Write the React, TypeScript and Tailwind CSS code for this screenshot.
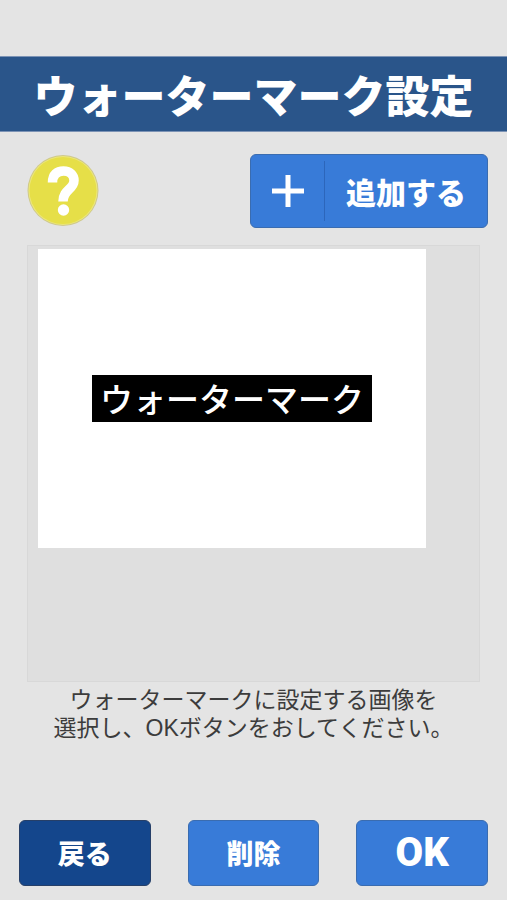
import React from "react";
import clsx from "clsx";

interface ActionButtonProps {
  label: string;
  className?: string;
  onClick?: () => void;
}

function ActionButton({ label, className, onClick }: ActionButtonProps) {
  return (
    <button
      type="button"
      onClick={onClick}
      className={clsx(
        "flex h-[66px] flex-1 items-center justify-center rounded-md border font-black text-white",
        className
      )}
    >
      {label}
    </button>
  );
}

function HelpButton() {
  return (
    <button type="button" aria-label="ヘルプ" className="rounded-full">
      <svg viewBox="0 0 72 72" className="h-[72px] w-[72px]">
        <circle cx="36" cy="36.5" r="35.5" fill="#cfc98a" />
        <circle cx="36" cy="36.5" r="34.5" fill="#ece77a" />
        <circle cx="36" cy="36.5" r="33.5" fill="#e6df48" />
        <path
          d="M25.5 28.5C25.5 20.5 30 17 36.5 17C43 17 47 21 47 26.5C47 35.5 36 35.5 36 47.5"
          fill="none"
          stroke="#fff"
          strokeWidth="9.5"
        />
        <circle cx="36.5" cy="56" r="5.7" fill="#fff" />
      </svg>
    </button>
  );
}

export default function App() {
  const [hasImage, setHasImage] = React.useState(true);

  return (
    <div className="flex min-h-screen flex-col bg-[#e4e4e4] pt-14 font-['Liberation_Sans','Noto_Sans_CJK_JP',sans-serif]">
      <header className="flex h-[76px] items-center justify-center border-y border-[#7c93b5] bg-[#2a558a]">
        <h1 className="font-['Noto_Sans_CJK_JP',sans-serif] text-[44px] leading-none font-black whitespace-nowrap text-white">
          ウォーターマーク設定
        </h1>
      </header>

      <div className="flex items-start justify-between pt-[22px] pr-[19px] pl-[27px]">
        <HelpButton />
        <button
          type="button"
          onClick={() => setHasImage(true)}
          className="flex h-[74px] w-[238px] items-center rounded-md border border-[#3a6cb0] bg-[#387bd8] text-white"
        >
          <span className="flex h-[60px] w-[74px] items-center justify-center border-r border-[#2c66bb]">
            <svg viewBox="0 0 32 32" className="h-8 w-8" aria-hidden="true">
              <path d="M16 0V32M0 16H32" stroke="#fff" strokeWidth="5" />
            </svg>
          </span>
          <span className="flex-1 text-center font-['Noto_Sans_CJK_JP',sans-serif] text-[30px] leading-none font-black">
            追加する
          </span>
        </button>
      </div>

      <main className="px-[27px] pt-[17px]">
        <div className="h-[437px] border border-[#d8d8d8] bg-[#dfdfdf] px-[10px] pt-[3px]">
          {hasImage && (
            <div className="flex aspect-[389/300] w-[90%] items-center justify-center bg-white">
              <span className="bg-black px-2 font-['Noto_Sans_CJK_JP',sans-serif] text-[33px] leading-[47px] font-medium whitespace-nowrap text-white">
                ウォーターマーク
              </span>
            </div>
          )}
        </div>
        <p className="pt-1 text-center text-[23px] leading-7 whitespace-nowrap text-[#3c3c3c]">
          ウォーターマークに設定する画像を
          <br />
          選択し、OKボタンをおしてください。
        </p>
      </main>

      <footer className="mt-auto flex gap-[37px] px-[19px] pb-[14px]">
        <ActionButton
          label="戻る"
          className="border-[#263f68] bg-[#14468c] font-['Noto_Sans_CJK_JP',sans-serif] text-[27px]"
        />
        <ActionButton
          label="削除"
          className="border-[#3a6cb0] bg-[#387bd8] font-['Noto_Sans_CJK_JP',sans-serif] text-[27px]"
          onClick={() => setHasImage(false)}
        />
        <ActionButton
          label="OK"
          className="border-[#3a6cb0] bg-[#387bd8] font-['Roboto',sans-serif] text-[40px]"
        />
      </footer>
    </div>
  );
}
